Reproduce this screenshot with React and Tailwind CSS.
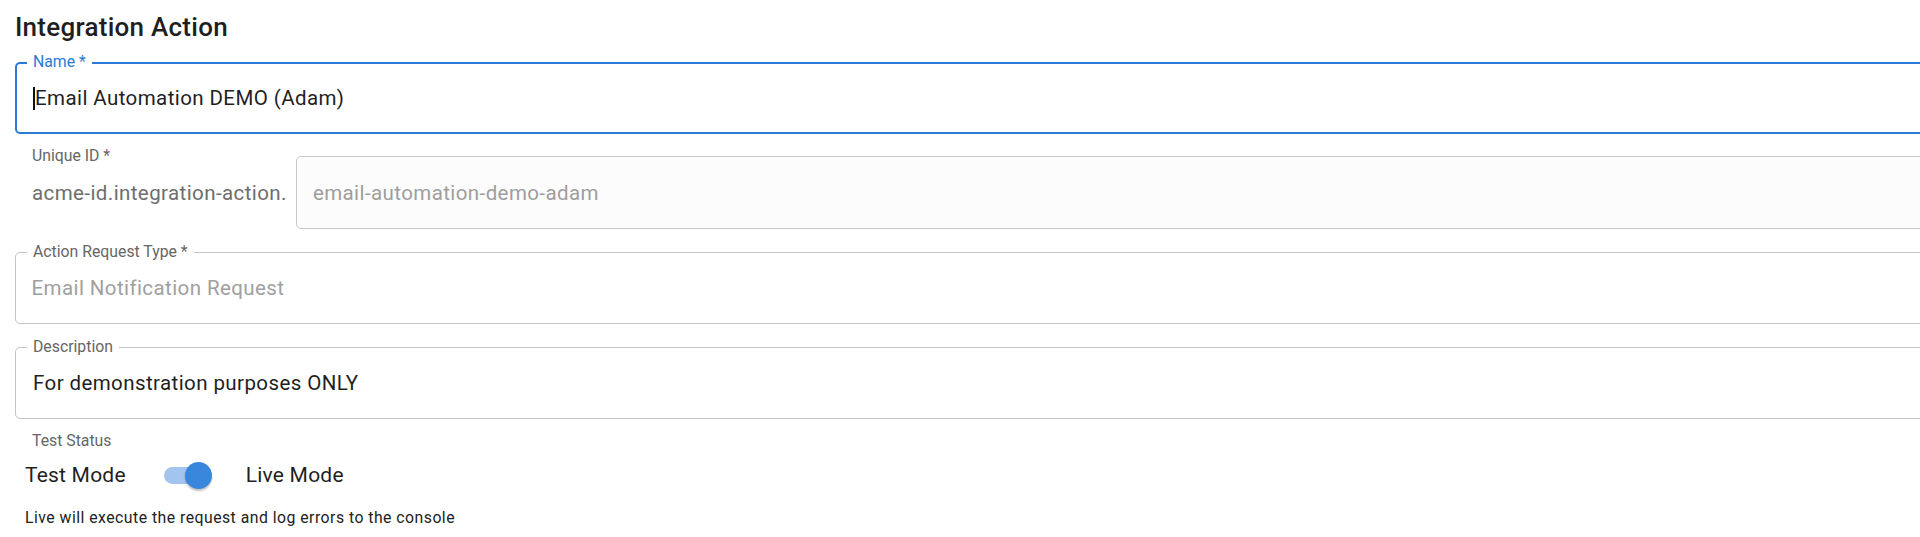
import React from "react";

function OutlinedField({ label, children, focused, className = "" }) {
  return (
    <div
      className={
        "relative h-[72px] rounded-[5px] flex items-center " +
        (focused ? "border-2 border-[#2b7bd6] pl-[16px] " : "border border-[#c4c4c4] pl-[15.5px] ") +
        className
      }
    >
      <span
        className={
          "absolute px-[6px] bg-white text-[15.8px] leading-[18px] whitespace-nowrap " +
          (focused ? "left-[10px] top-[-11px] text-[#2b7bd6]" : "left-[11px] top-[-10px] text-[#666666]")
        }
      >
        {label}
      </span>
      {children}
    </div>
  );
}

export default function App() {
  return (
    <div className="w-[1920px] h-[537px] overflow-hidden bg-white font-[Roboto,'Liberation_Sans',sans-serif]">
      <div className="w-[1965px] pl-[15px]">
        <h2 className="pt-[11px] text-[26px] leading-[32px] font-medium text-[#1f1f1f] tracking-[0.01em]">
          Integration Action
        </h2>

        <OutlinedField label="Name *" focused className="mt-[19px]">
          <span className="flex items-center text-[20.5px] leading-[24px] text-[#1f1f1f] tracking-[0.02em]">
            <span className="inline-block w-[1.5px] h-[23px] bg-[#111] mr-[0.5px]" />
            Email Automation DEMO (Adam)
          </span>
        </OutlinedField>

        <div className="mt-[13px] flex items-start">
          <div className="pl-[17px] flex flex-col shrink-0">
            <span className="text-[15.8px] leading-[18px] text-[#666666]">Unique ID *</span>
            <span className="mt-[16px] text-[20.5px] leading-[24px] text-[#6e6e6e] tracking-[0.02em]">
              acme-id.integration-action.
            </span>
          </div>
          <div className="ml-[9px] mt-[9px] flex-1 h-[73px] rounded-[5px] border border-[#c8c8c8] bg-[#fcfcfc] flex items-center pl-[16px]">
            <span className="text-[20.5px] leading-[24px] text-[#9e9e9e] tracking-[0.02em]">
              email-automation-demo-adam
            </span>
          </div>
        </div>

        <OutlinedField label="Action Request Type *" className="mt-[23px]">
          <span className="text-[20.5px] leading-[24px] text-[#a0a0a0] tracking-[0.02em]">
            Email Notification Request
          </span>
        </OutlinedField>

        <OutlinedField label="Description" className="mt-[23px]">
          <span className="pl-[1.5px] text-[20.5px] leading-[24px] text-[#1f1f1f] tracking-[0.02em]">
            For demonstration purposes ONLY
          </span>
        </OutlinedField>

        <div className="mt-[13px] pl-[17px] text-[15.8px] leading-[18px] text-[#666666]">Test Status</div>

        <div className="mt-[6px] h-[38px] flex items-center pl-[10px]">
          <span className="text-[21px] leading-[24px] text-[#1f1f1f] tracking-[0.01em]">Test Mode</span>
          <div className="ml-[38px] relative w-[48px] h-[28px] flex items-center">
            <div className="w-[42px] h-[17px] rounded-full bg-[#a3c4ee]" />
            <div className="absolute left-[21px] top-[0.5px] w-[27px] h-[27px] rounded-full bg-[#3987dc] shadow-[0_2px_2px_rgba(0,0,0,0.25)]" />
          </div>
          <span className="ml-[34px] text-[21px] leading-[24px] text-[#1f1f1f] tracking-[0.01em]">Live Mode</span>
        </div>

        <p className="mt-[14px] pl-[10px] text-[15.8px] leading-[20px] text-[#222] tracking-[0.03em]">
          Live will execute the request and log errors to the console
        </p>
      </div>
    </div>
  );
}
